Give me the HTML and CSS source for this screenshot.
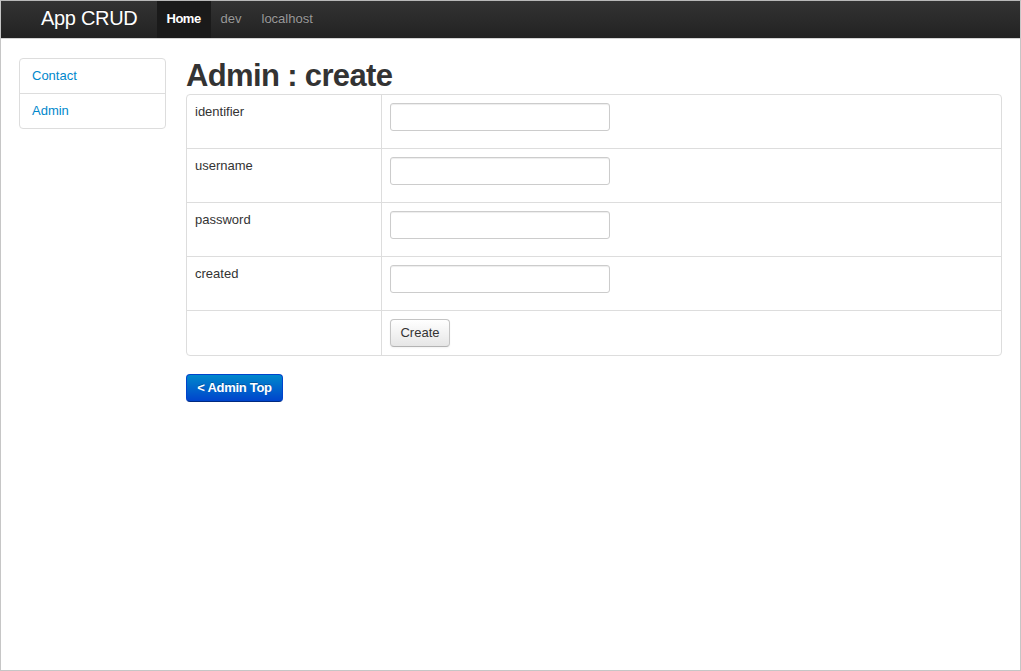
FILE: index.html
```html
<!DOCTYPE html>
<html>
<head>
<meta charset="utf-8">
<title>App CRUD</title>
<link rel="stylesheet" href="styles.css">
</head>
<body>
<div class="frame">
  <div class="navbar">
    <a class="brand" href="#">App CRUD</a>
    <ul class="nav">
      <li class="active"><a href="#">Home</a></li>
      <li><a href="#">dev</a></li>
      <li><a href="#">localhost</a></li>
    </ul>
  </div>
  <div class="main">
    <ul class="sidebar">
      <li><a href="#">Contact</a></li>
      <li><a href="#">Admin</a></li>
    </ul>
    <div class="content">
      <h1>Admin : create</h1>
      <form class="form">
        <div class="row">
          <div class="label">identifier</div>
          <div class="field"><input type="text" class="input"></div>
        </div>
        <div class="row">
          <div class="label">username</div>
          <div class="field"><input type="text" class="input"></div>
        </div>
        <div class="row">
          <div class="label">password</div>
          <div class="field"><input type="text" class="input"></div>
        </div>
        <div class="row">
          <div class="label">created</div>
          <div class="field"><input type="text" class="input"></div>
        </div>
        <div class="row last">
          <div class="label"></div>
          <div class="field"><button type="button" class="btn">Create</button></div>
        </div>
      </form>
      <a class="btn-primary" href="#">&lt; Admin Top</a>
    </div>
  </div>
</div>
</body>
</html>
```
FILE: styles.css
```css
* { box-sizing: border-box; }
html, body { margin: 0; padding: 0; background: #fff; }
body {
  font-family: "Liberation Sans", Arial, sans-serif;
  font-size: 13px;
  line-height: 18px;
  color: #333;
}
.frame {
  width: 1021px;
  height: 671px;
  border: 1px solid #c6c6c6;
  border-top-color: #b8b8b8;
  overflow: hidden;
}
.navbar {
  height: 38px;
  background: linear-gradient(to bottom, #333333, #222222);
  border-bottom: 1px solid #d4d4d4;
  display: flex;
  align-items: stretch;
  padding-left: 39px;
}
.brand {
  color: #ffffff;
  text-decoration: none;
  font-size: 20px;
  line-height: 30px;
  padding: 2px 19px 0 1px;
  letter-spacing: -0.3px;
  text-shadow: 0 -1px 0 rgba(0,0,0,0.25);
}
.nav {
  list-style: none;
  margin: 0;
  padding: 0;
  display: flex;
}
.nav li a {
  display: block;
  color: #999;
  text-decoration: none;
  padding: 9px 10px 10px;
  height: 37px;
  line-height: 18px;
  text-shadow: 0 -1px 0 rgba(0,0,0,0.25);
}
.nav li.active a {
  width: 54px;
  background: #1a1a1a;
  color: #fff;
  font-weight: bold;
  letter-spacing: -0.5px;
}
.main {
  display: flex;
  align-items: flex-start;
  padding: 19px 18px 0 18px;
  gap: 20px;
}
.sidebar {
  list-style: none;
  margin: 0;
  padding: 0;
  width: 147px;
  flex: 0 0 147px;
  border: 1px solid #ddd;
  border-radius: 4px;
}
.sidebar li + li { border-top: 1px solid #ddd; }
.sidebar li a {
  display: block;
  padding: 8px 12px 8px 12px;
  height: 34px;
  color: #0088cc;
  text-decoration: none;
}
.content { flex: 1; }
h1 {
  margin: 0;
  font-size: 31px;
  line-height: 36px;
  font-weight: bold;
  color: #333;
  letter-spacing: -0.65px;
}
.form {
  border: 1px solid #ddd;
  border-radius: 4px;
  margin: 0 0 18px 0;
}
.row {
  display: flex;
  border-top: 1px solid #ddd;
}
.row:first-child { border-top: 0; }
.label {
  width: 195px;
  flex: 0 0 195px;
  border-right: 1px solid #ddd;
  padding: 8px 8px;
  line-height: 18px;
}
.field {
  flex: 1;
  padding: 8px 8px 8px 8px;
}
.input {
  display: block;
  width: 220px;
  height: 28px;
  margin: 0 0 9px 0;
  border: 1px solid #ccc;
  border-radius: 3px;
  box-shadow: inset 0 1px 1px rgba(0,0,0,0.075);
  background: #fff;
  font: inherit;
}
.btn {
  display: block;
  height: 28px;
  width: 60px;
  padding: 4px 0;
  text-align: center;
  font: inherit;
  color: #333;
  background: linear-gradient(to bottom, #ffffff, #e6e6e6);
  border: 1px solid #c4c4c4;
  border-bottom-color: #b3b3b3;
  border-radius: 4px;
  box-shadow: inset 0 1px 0 rgba(255,255,255,0.2), 0 1px 2px rgba(0,0,0,0.05);
  line-height: 18px;
}
.btn-primary {
  display: inline-block;
  height: 28px;
  width: 97px;
  text-align: center;
  padding: 4px 0;
  color: #fff;
  font-weight: bold;
  text-decoration: none;
  background: linear-gradient(to bottom, #0088cc, #0044cc);
  border: 1px solid #0044cc;
  border-bottom-color: #002a80;
  border-radius: 4px;
  text-shadow: 0 -1px 0 rgba(0,0,0,0.25);
  line-height: 18px;
  letter-spacing: -0.3px;
}
```
